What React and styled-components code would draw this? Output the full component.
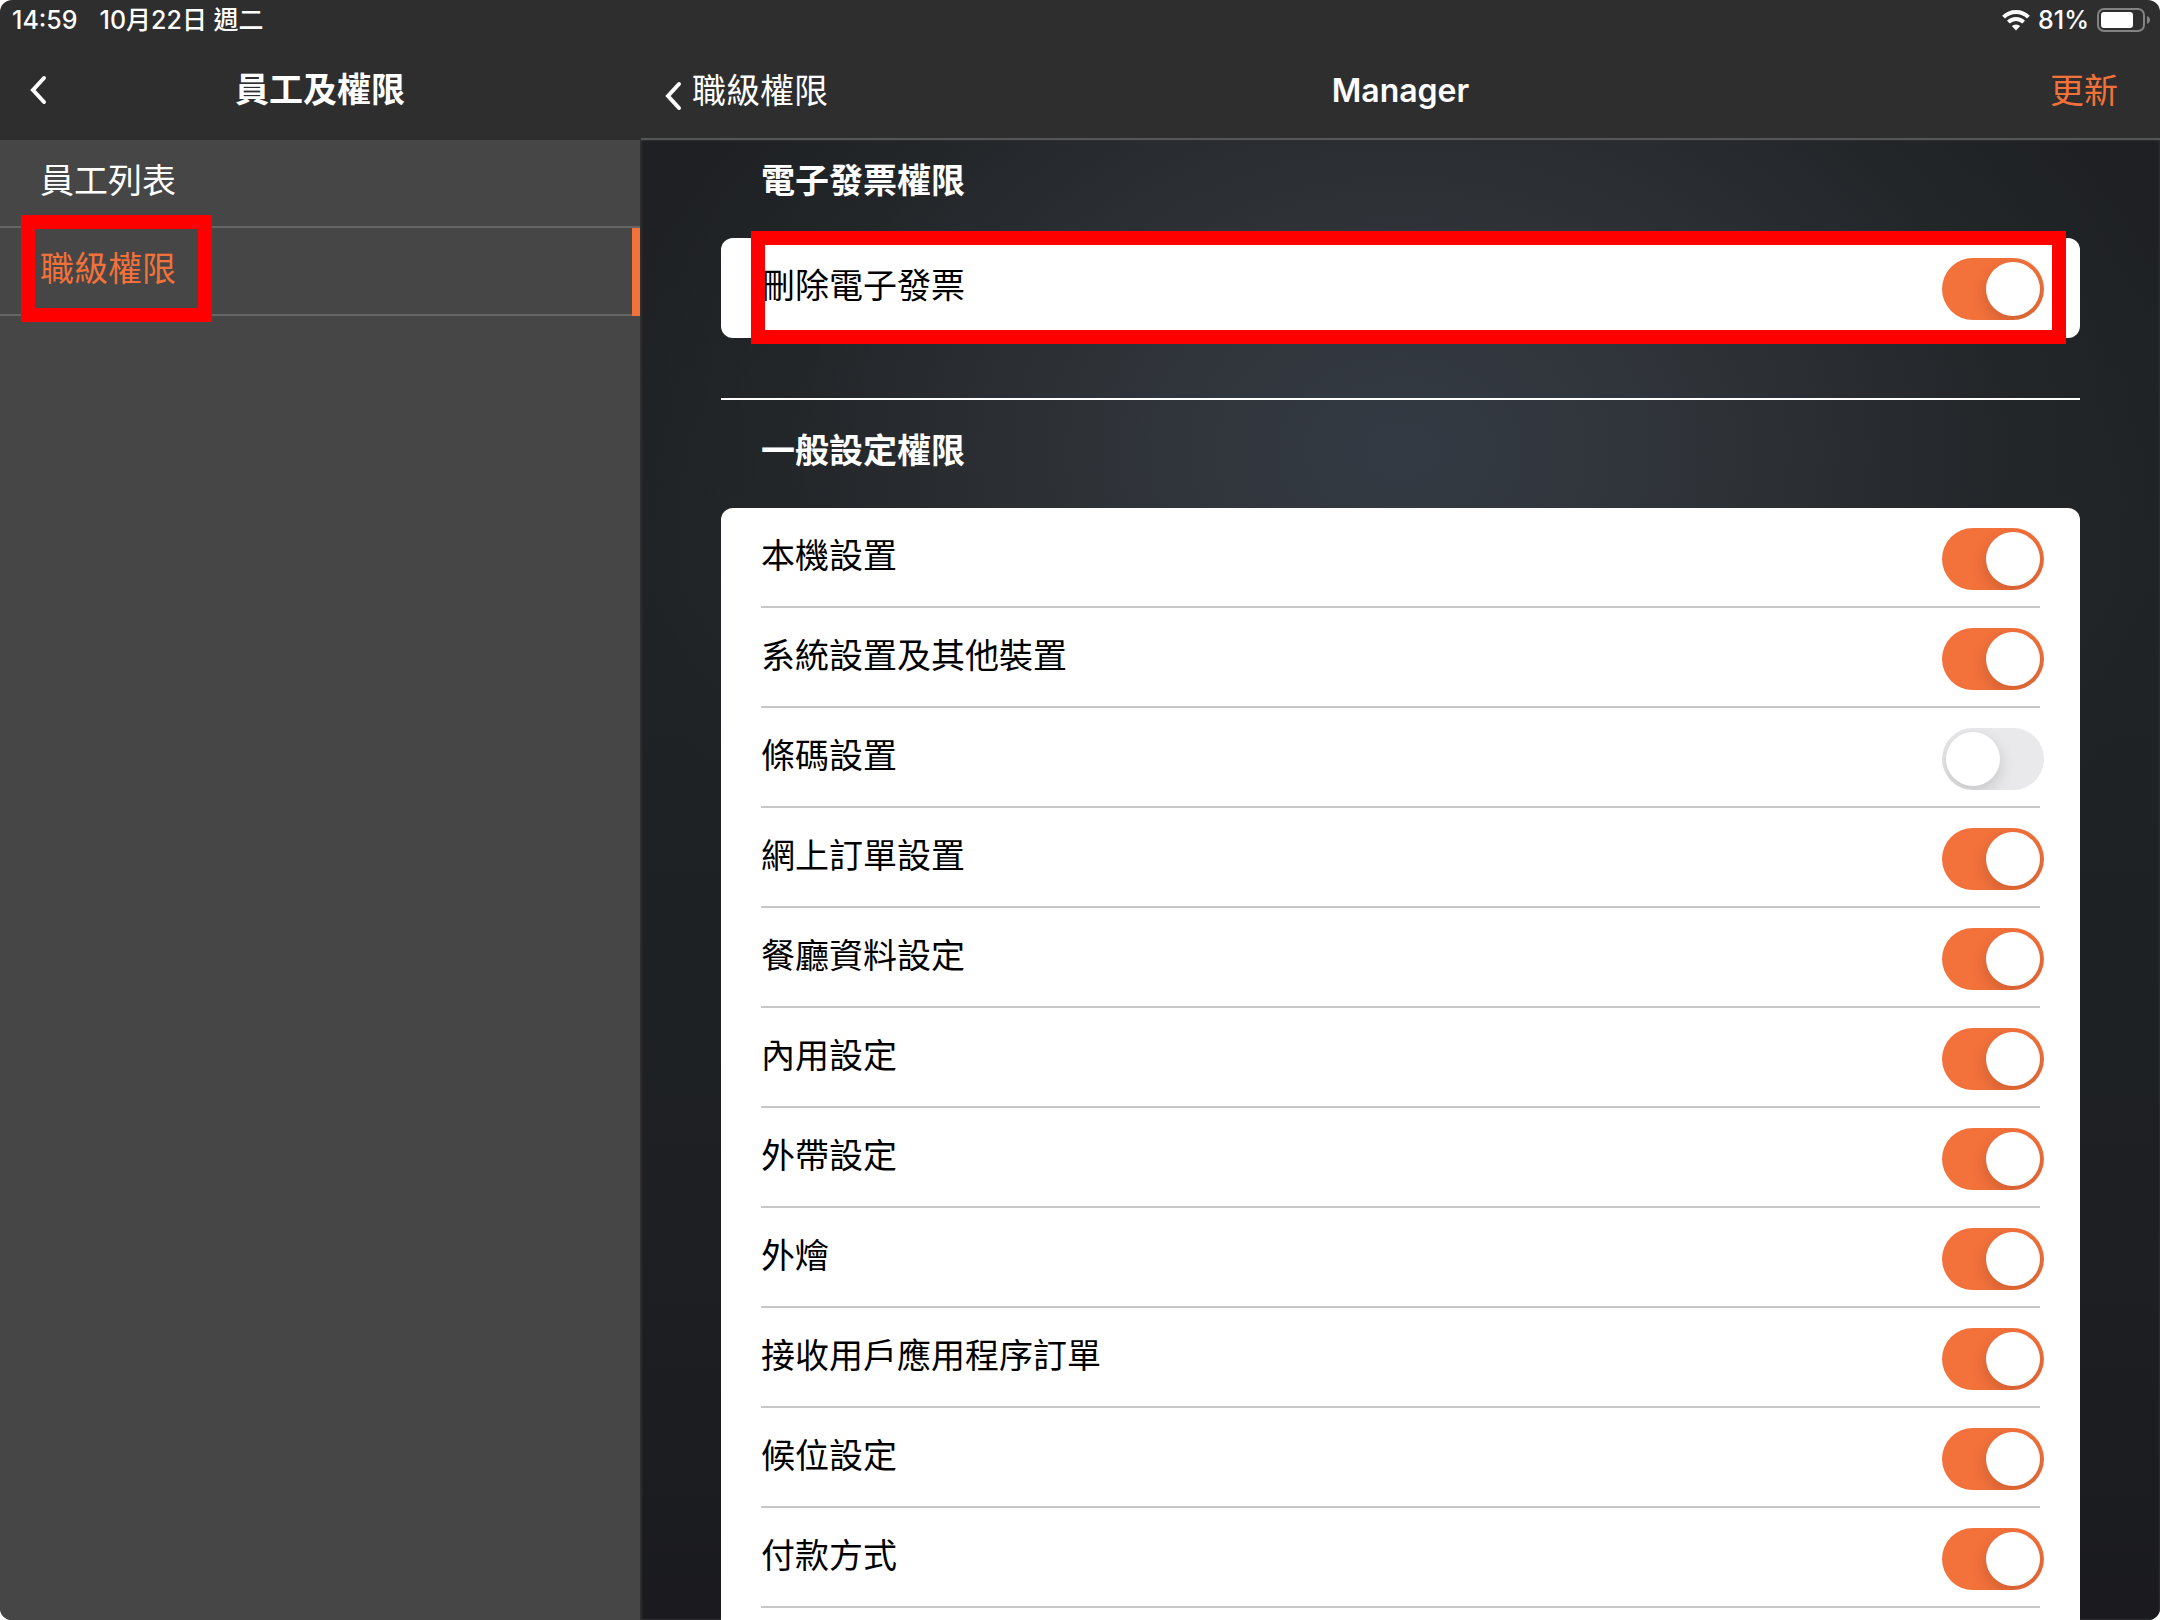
import { useState } from "react";
import styled, { createGlobalStyle } from "styled-components";

const invoicePermissions = [
    { id: "delete-invoice", name: "刪除電子發票", on: true },
];

const generalPermissions = [
    { id: "device", name: "本機設置", on: true },
    { id: "system", name: "系統設置及其他裝置", on: true },
    { id: "barcode", name: "條碼設置", on: false },
    { id: "online-order", name: "網上訂單設置", on: true },
    { id: "restaurant", name: "餐廳資料設定", on: true },
    { id: "dine-in", name: "內用設定", on: true },
    { id: "takeaway", name: "外帶設定", on: true },
    { id: "catering", name: "外燴", on: true },
    { id: "app-order", name: "接收用戶應用程序訂單", on: true },
    { id: "waitlist", name: "候位設定", on: true },
    { id: "payment", name: "付款方式", on: true },
];

function Chevron() {
    return (
        <svg width="20" height="32" viewBox="0 0 20 32" fill="none" stroke="#fff" strokeWidth="4" strokeLinecap="round">
            <path d="M16 4 5 16l11 12" />
        </svg>
    );
}

function Wifi() {
    return (
        <svg width="28" height="22" viewBox="0 0 28 22" fill="none" stroke="#fff" strokeWidth="4">
            <path d="M1.600 8.200a17.600 17.600 0 0 1 24.800 0" />
            <path d="M6.400 13.200a10.800 10.800 0 0 1 15.200 0" />
            <path d="M14 21.500l-4.200-4.400a6 6 0 0 1 8.400 0z" fill="#fff" stroke="none" />
        </svg>
    );
}

function Battery() {
    return (
        <svg width="54" height="24" viewBox="0 0 54 24">
            <rect x="1" y="1" width="46" height="22" rx="6" fill="none" stroke="#828282" strokeWidth="2" />
            <rect x="4" y="4" width="32" height="16" rx="3" fill="#fff" />
            <path d="M50 8c2 .8 3 2.200 3 4s-1 3.200-3 4z" fill="#828282" />
        </svg>
    );
}

function Permission({ item }) {
    const [on, setOn] = useState(item.on);

    return (
        <Row>
            <RowLabel htmlFor={item.id}>{item.name}</RowLabel>
            <Switch type="checkbox" id={item.id} checked={on} onChange={(e) => setOn(e.target.checked)} />
        </Row>
    );
}

export default function App() {
    return (
        <Screen>
            <GlobalStyle />
            <StatusBar>
                <span>14:59</span>
                <span>10月22日 週二</span>
                <StatusRight>
                    <Wifi />
                    <span>81%</span>
                    <Battery />
                </StatusRight>
            </StatusBar>
            <Columns>
                <Sidebar>
                    <SidebarBar>
                        <NavButton type="button" aria-label="返回"><Chevron /></NavButton>
                        <BarTitle>員工及權限</BarTitle>
                    </SidebarBar>
                    <nav>
                        <MenuLink href="#staff">員工列表</MenuLink>
                        <MenuLink href="#roles" $active>
                            職級權限
                            <MenuMark />
                        </MenuLink>
                    </nav>
                </Sidebar>
                <Detail>
                    <DetailBar>
                        <BackButton type="button">
                            <Chevron />
                            <span>職級權限</span>
                        </BackButton>
                        <BarTitle $latin>Manager</BarTitle>
                        <UpdateButton type="button">更新</UpdateButton>
                    </DetailBar>
                    <Content>
                        <SectionTitle>電子發票權限</SectionTitle>
                        <Card>
                            {invoicePermissions.map(item => <Permission key={item.id} item={item} />)}
                            <CardMark />
                        </Card>
                        <Divider />
                        <SectionTitle>一般設定權限</SectionTitle>
                        <Card $lined>
                            {generalPermissions.map(item => <Permission key={item.id} item={item} />)}
                        </Card>
                    </Content>
                </Detail>
            </Columns>
        </Screen>
    );
}

const GlobalStyle = createGlobalStyle`
    * {
        box-sizing: border-box;
    }
    body {
        margin: 0;
        background: #fff;
        font-family: Inter, "Noto Sans CJK TC", sans-serif;
        font-size: 34px;
        line-height: 48px;
        color: #fff;
    }
    button {
        border: 0;
        padding: 0;
        background: none;
        font: inherit;
        color: inherit;
        cursor: pointer;
    }
    svg {
        display: block;
        flex-shrink: 0;
    }
`;

const Screen = styled.div`
    display: flex;
    flex-direction: column;
    height: 100vh;
    overflow: hidden;
    border-radius: 12px;
    background: #2e2e2e;
`;

const StatusBar = styled.header`
    display: flex;
    align-items: center;
    gap: 22px;
    height: 40px;
    padding: 0 9px 0 12px;
    font-size: 25px;
    line-height: 40px;
    font-weight: 500;
`;

const StatusRight = styled.div`
    display: flex;
    align-items: center;
    gap: 8px;
    margin-left: auto;
`;

const Columns = styled.div`
    display: flex;
    flex: 1;
    min-height: 0;
`;

const Sidebar = styled.aside`
    flex: 0 0 640px;
    background: #464646;
`;

const SidebarBar = styled.div`
    display: grid;
    grid-template-columns: 40px 1fr 40px;
    align-items: center;
    height: 100px;
    padding: 0 28px;
    background: #2e2e2e;
`;

const DetailBar = styled.div`
    display: grid;
    grid-template-columns: 1fr auto 1fr;
    align-items: center;
    height: 100px;
    padding: 4px 42px 0 22px;
    border-bottom: 2px solid #565656;
    background: #2e2e2e;
`;

const BarTitle = styled.h1`
    margin: 0;
    padding-left: ${({ $latin }) => $latin ? "20px" : "0"};
    font-size: ${({ $latin }) => $latin ? "32px" : "34px"};
    font-weight: 600;
    text-align: center;
`;

const NavButton = styled.button`
    justify-self: start;
`;

const BackButton = styled.button`
    display: flex;
    align-items: center;
    gap: 9px;
    justify-self: start;

    svg {
        margin-top: 10px;
    }
`;

const UpdateButton = styled.button`
    justify-self: end;
    color: #f3713b;
`;

const MenuLink = styled.a`
    display: block;
    position: relative;
    height: 88px;
    padding: 17px 40px 0;
    border-bottom: 2px solid #666;
    color: ${({ $active }) => $active ? "#f3713b" : "#fff"};
    text-decoration: none;

    &::after {
        content: "";
        display: ${({ $active }) => $active ? "block" : "none"};
        position: absolute;
        top: 0;
        right: 0;
        bottom: -2px;
        width: 8px;
        background: #f3713b;
    }
`;

const Mark = styled.span`
    position: absolute;
    border: 14px solid #f00;
    pointer-events: none;
`;

const MenuMark = styled(Mark)`
    top: -13px;
    left: 21px;
    bottom: -8px;
    width: 191px;
`;

const CardMark = styled(Mark)`
    top: -7px;
    left: 30px;
    right: 14px;
    bottom: -6px;
`;

const Detail = styled.main`
    display: flex;
    flex-direction: column;
    flex: 1;
    min-width: 0;
    border-left: 1px solid #2e2e2e;
`;

const Content = styled.div`
    flex: 1;
    min-height: 0;
    overflow: hidden;
    padding: 0 80px;
    box-shadow: inset 0 0 2px 1px #2e3033;
    background:
        radial-gradient(ellipse 800px 620px at 50% 21%, #343a43 0%, #31363d 25%, #2b2f33 50%, rgba(36, 40, 43, 0.8) 75%, rgba(31, 34, 37, 0) 100%),
        linear-gradient(#1e2023 0%, #1f2326 30%, #1e2124 60%, #1b1b1f 100%);
`;

const SectionTitle = styled.h2`
    margin: 0;
    padding: 17px 40px 33px;
    font-size: 34px;
    font-weight: 600;
`;

const Divider = styled.hr`
    height: 2px;
    margin: 60px 0 10px;
    border: 0;
    background: #fff;
`;

const Row = styled.div`
    display: flex;
    justify-content: space-between;
    align-items: flex-start;
    height: 100px;
    padding-top: 20px;
`;

const Card = styled.section`
    position: relative;
    padding: 0 40px ${({ $lined }) => $lined ? "60px" : "0"};
    border-radius: 12px;
    background: #fff;
    color: #000;

    ${Row} {
        border-bottom: 2px solid ${({ $lined }) => $lined ? "#c7c7c7" : "transparent"};
    }
`;

const RowLabel = styled.label`
    flex: 1;
    padding-top: 4px;
`;

const Switch = styled.input`
    appearance: none;
    flex-shrink: 0;
    width: 102px;
    height: 62px;
    margin: 0 -4px 0 0;
    padding: 4px;
    border-radius: 31px;
    background: #e9e9eb;
    overflow: hidden;
    cursor: pointer;

    &::before {
        content: "";
        display: block;
        width: 54px;
        height: 54px;
        border-radius: 50%;
        background: #fff;
        box-shadow: 0 6px 16px rgba(0, 0, 0, 0.16);
    }

    &:checked {
        background: #f3713b;
    }

    &:checked::before {
        margin-left: auto;
    }
`;
